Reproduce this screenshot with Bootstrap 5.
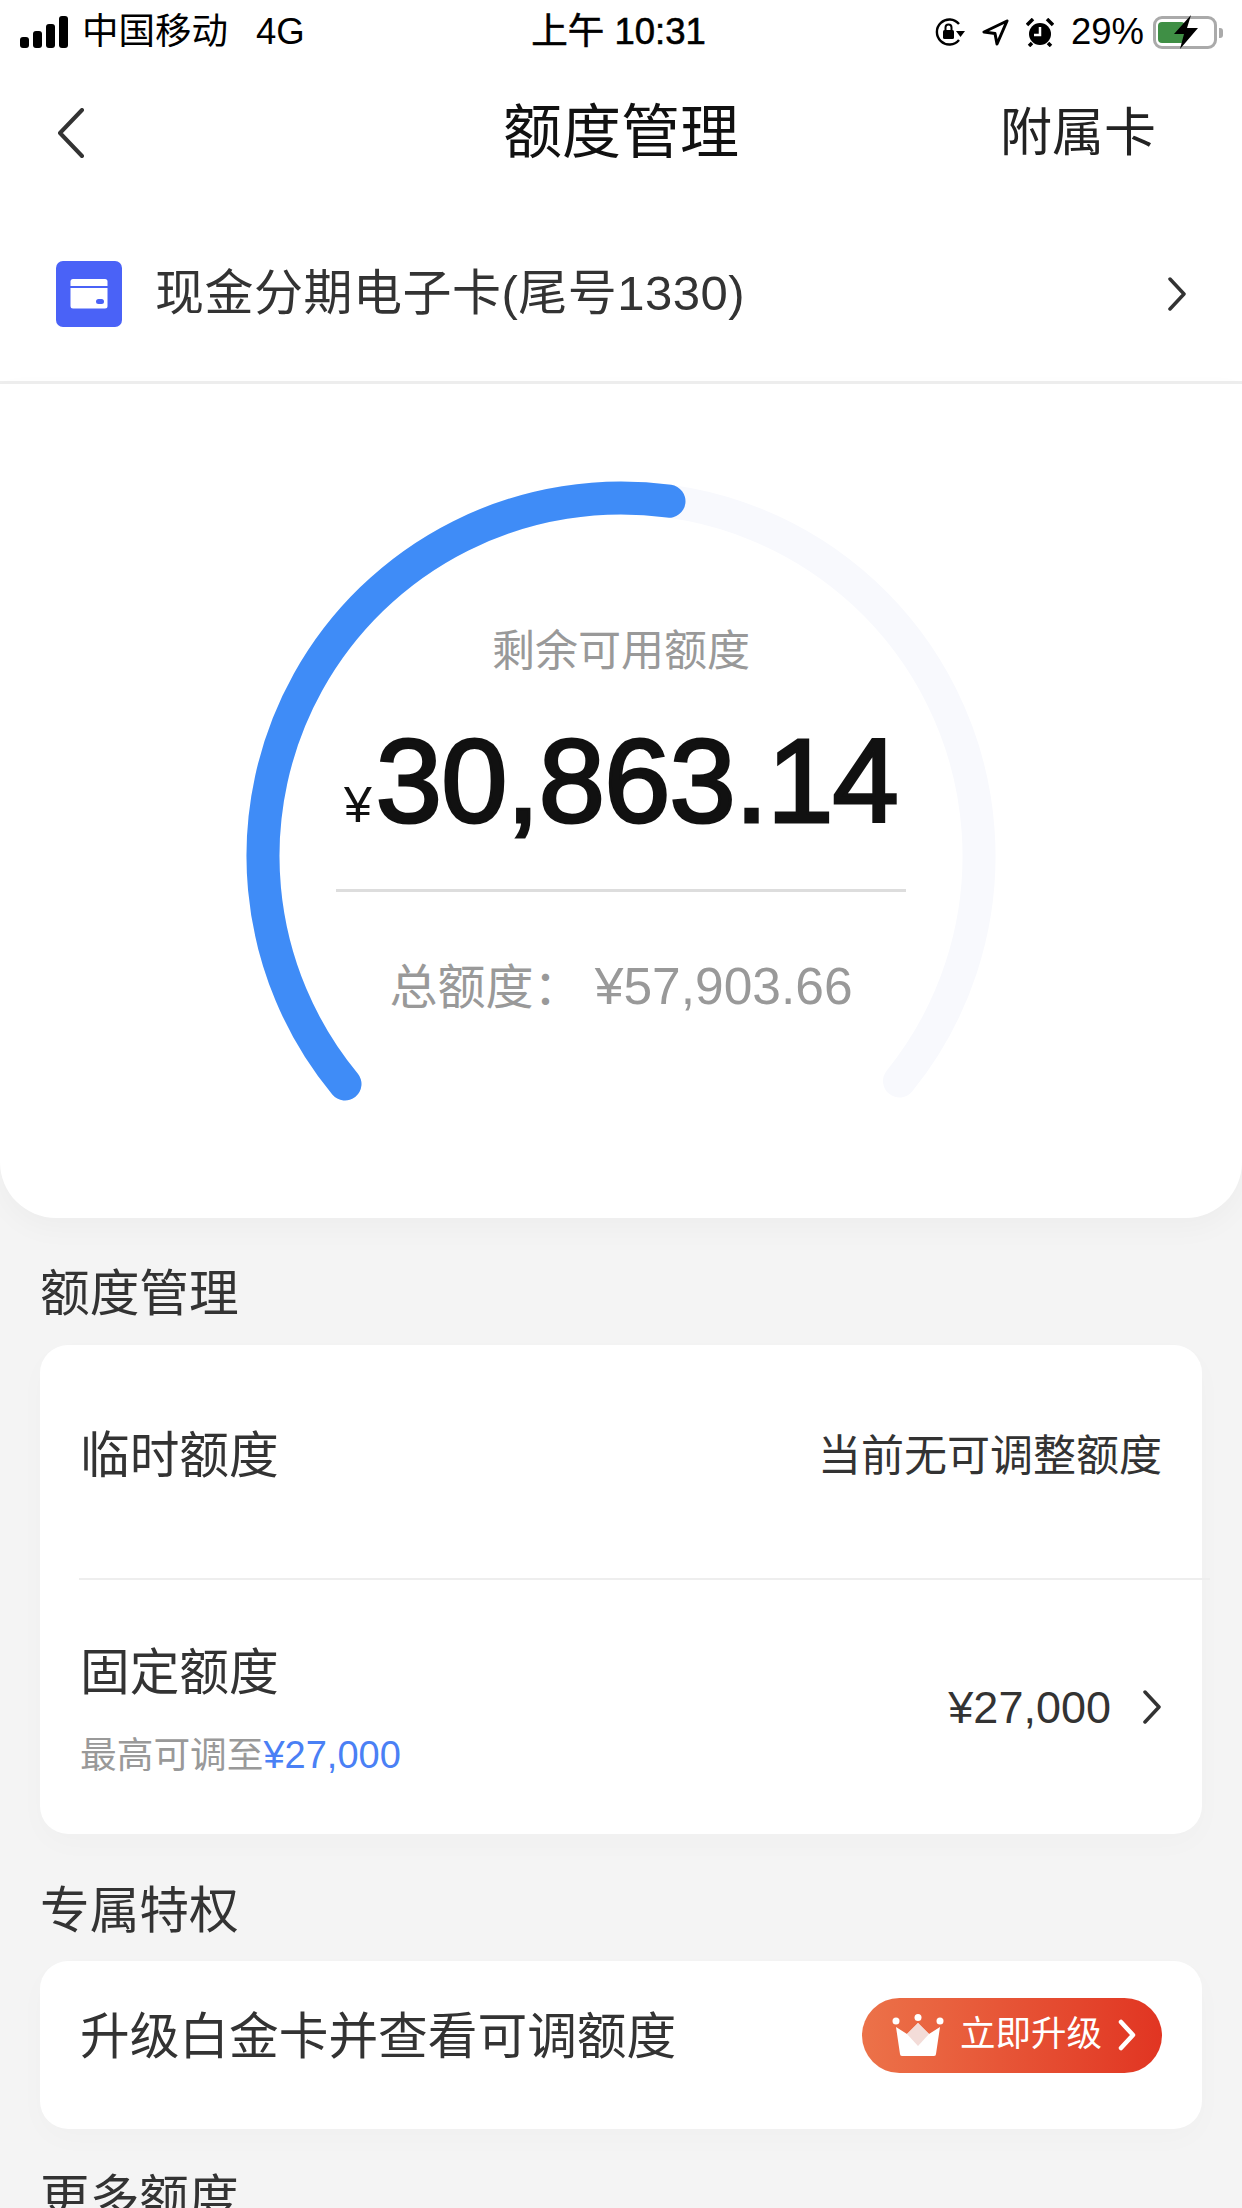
<!DOCTYPE html>
<html lang="zh-CN">
<head>
    <meta charset="UTF-8">
    <meta name="viewport" content="width=device-width, initial-scale=1.0">
    <title>额度管理</title>
    <link href="https://cdn.jsdelivr.net/npm/bootstrap@5.3.0/dist/css/bootstrap.min.css" rel="stylesheet">
    <style>
        html, body {
            height: 2208px;
            overflow: hidden;
        }
        body {
            background-color: #f4f4f4;
            color: #333;
            font-family: "Liberation Sans", "Noto Sans CJK SC", sans-serif;
        }
        .status-bar {
            height: 62px;
            padding: 2px 25px 0 20px;
            color: #000;
            font-size: 36.500px;
            line-height: 60px;
        }
        .status-side { flex: 1 1 0; }
        .signal { gap: 4px; height: 32px; }
        .signal i { display: block; width: 9px; border-radius: 3px; background: #000; }
        .signal-1 { height: 11px; }
        .signal-2 { height: 17px; }
        .signal-3 { height: 24px; }
        .signal-4 { height: 32px; }
        .carrier-name { margin-left: 14px; }
        .carrier-net { margin-left: 28px; }
        .clock { font-size: 36.500px; -webkit-text-stroke: .6px #000; }
        .status-icons { gap: 17px; }
        .battery {
            width: 64px;
            height: 33px;
            border: 3px solid #aaa;
            border-radius: 9px;
            margin-left: 9px;
        }
        .battery-fill { left: 2px; top: 3px; width: 27px; height: 21px; background: #3f8f45; border-radius: 4px; }
        .battery-bolt { left: 16px; top: -4px; }
        .battery-nub { left: 63px; top: 9px; width: 4px; height: 10px; background: #aaa; border-radius: 0 3px 3px 0; }

        .top-nav { height: 142px; padding: 0 86px 0 57px; }
        .top-title { font-size: 59px; color: #111; left: 0; right: 0; top: 0; line-height: 142px; text-align: center; }
        .top-action { font-size: 52px; color: #222; }

        .card-picker {
            height: 180px;
            padding: 2px 56px 0;
            border-bottom: 3px solid #eee;
        }
        .wallet-icon { width: 66px; height: 66px; }
        .card-name { font-size: 49px; margin-left: 33px; color: #333; letter-spacing: .5px; }

        .hero {
            height: 834px;
            padding-top: 237px;
            border-radius: 0 0 56px 56px;
            box-shadow: 0 10px 30px rgba(0, 0, 0, .03);
        }
        .gauge { left: 0; top: 0; }
        .hero-label { font-size: 43px; line-height: 60px; color: #999; position: relative; }
        .hero-amount {
            font-size: 119px;
            line-height: 140px;
            -webkit-text-stroke: 3px #111;
            color: #111;
            margin-top: 30px;
            letter-spacing: -.8px;
            position: relative;
        }
        .hero-yen { font-size: 50px; -webkit-text-stroke: 0; letter-spacing: 0; margin-right: 4px; }
        .hero-rule { width: 570px; height: 3px; background: #ddd; margin: 14px auto 0; position: relative; }
        .hero-total { font-size: 48px; line-height: 60px; color: #999; margin-top: 64px; position: relative; }
        .hero-total-num { font-size: 51.500px; }

        .page-body { padding: 0 40px; }
        .section-title { font-size: 49.700px; line-height: 60px; color: #333; }
        .title-limit { margin: 46px 0 21px; }
        .title-perk { margin: 47px 0 20px; }
        .title-more { margin-top: 40px; }
        .panel {
            border: 0;
            border-radius: 28px;
            box-shadow: 0 10px 30px rgba(0, 0, 0, .02);
        }
        .panel-row-top { height: 233px; padding: 81px 40px 0; }
        .panel-divider { height: 2px; background: #eee; margin: 0 -8px 0 39px; }
        .panel-row-bottom { height: 254px; padding: 0 40px; }
        .row-name { font-size: 49.700px; line-height: 60px; }
        .row-value { font-size: 43px; line-height: 60px; }
        .row-stack { padding-top: 63px; }
        .row-sub { font-size: 36.700px; line-height: 50px; margin-top: 27px; color: #999; white-space: nowrap; }
        .row-sub-num { color: #4a80f5; font-size: 38px; }
        .row-amount { font-size: 45px; color: #333; margin-right: 31px; padding-top: 2px; }

        .perk-panel { height: 168px; padding: 0 40px 20px; }
        .perk-name { padding-top: 3px; }
        .upgrade-btn {
            width: 300px;
            height: 75px;
            border-radius: 38px;
            background: linear-gradient(90deg, #ec7249, #e13522);
            font-size: 35.500px;
            color: #fff;
            padding: 0 27px 0 30px;
        }
        .upgrade-text { margin-left: 16px; margin-right: 16px; white-space: nowrap; }
    </style>
</head>
<body>
<div class="status-bar bg-white d-flex align-items-center">
    <div class="status-side d-flex align-items-center">
        <div class="signal d-flex align-items-end">
            <i class="signal-1"></i><i class="signal-2"></i><i class="signal-3"></i><i class="signal-4"></i>
        </div>
        <span class="carrier-name">中国移动</span>
        <span class="carrier-net">4G</span>
    </div>
    <div class="clock">上午 10:31</div>
    <div class="status-side status-icons d-flex align-items-center justify-content-end">
        <svg width="31" height="28" viewBox="0 0 31 28">
            <path d="M25 6A12.500 12.500 0 1 0 25 22" fill="none" stroke="#000" stroke-width="2.400"/>
            <path d="M22 13h9l-4.500 6z" fill="#000"/>
            <rect x="9" y="12" width="11" height="9" rx="1.500" fill="#000"/>
            <path d="M11.500 12V9.500a3 3 0 0 1 6 0V12" fill="none" stroke="#000" stroke-width="2"/>
        </svg>
        <svg width="27" height="27" viewBox="0 0 27 27">
            <path d="M25 2 2 13l11 1.500L15 25z" fill="none" stroke="#000" stroke-width="3" stroke-linejoin="round"/>
        </svg>
        <svg width="28" height="29" viewBox="0 0 28 29">
            <circle cx="14" cy="16" r="11" fill="#000"/>
            <path d="M14 9v8H8" fill="none" stroke="#fff" stroke-width="2.500"/>
            <path d="M1 7 7 1M27 7 21 1M6 25l-3 3M22 25l3 3" stroke="#000" stroke-width="3.500"/>
        </svg>
        <div class="d-flex align-items-center">
            <span>29%</span>
            <div class="battery position-relative">
                <div class="battery-fill position-absolute"></div>
                <svg class="battery-bolt position-absolute" width="28" height="34" viewBox="0 0 28 34">
                    <path d="M19 0 2 19h10L8 34l18-21H15z" fill="#000"/>
                </svg>
                <div class="battery-nub position-absolute"></div>
            </div>
        </div>
    </div>
</div>

<div class="top-nav bg-white d-flex align-items-center justify-content-between position-relative">
    <div class="top-title position-absolute">额度管理</div>
    <svg class="position-relative" width="28" height="50" viewBox="0 0 28 50">
        <path d="M25 2 3 25l22 23" fill="none" stroke="#333" stroke-width="4" stroke-linecap="round" stroke-linejoin="round"/>
    </svg>
    <div class="top-action position-relative">附属卡</div>
</div>

<div class="card-picker bg-white d-flex align-items-center">
    <svg class="wallet-icon" viewBox="0 0 66 66">
        <rect width="66" height="66" rx="7" fill="#4a62f7"/>
        <path d="M17 18h32a2.500 2.500 0 0 1 2.500 2.500V25h-37v-4.500A2.500 2.500 0 0 1 17 18z" fill="#fff"/>
        <path d="M14.500 27h37v18a2.500 2.500 0 0 1-2.500 2.500H17a2.500 2.500 0 0 1-2.500-2.500z" fill="#fff"/>
        <rect x="40" y="38" width="8" height="5" rx="2.500" fill="#4a62f7"/>
    </svg>
    <span class="card-name">现金分期电子卡(尾号1330)</span>
    <svg class="ms-auto" width="18" height="34" viewBox="0 0 18 34">
        <path d="M2 2l14 15L2 32" fill="none" stroke="#333" stroke-width="3.500" stroke-linecap="round" stroke-linejoin="round"/>
    </svg>
</div>

<div class="hero bg-white text-center position-relative">
    <svg class="gauge position-absolute" width="1242" height="834" viewBox="0 0 1242 834">
        <path d="M345 700A358 358 0 1 1 899.500 697" fill="none" stroke="#f8f9fd" stroke-width="33" stroke-linecap="round"/>
        <path d="M345 700A358 358 0 0 1 669 117.200" fill="none" stroke="#3f8cf7" stroke-width="33" stroke-linecap="round"/>
    </svg>
    <div class="hero-label">剩余可用额度</div>
    <div class="hero-amount"><span class="hero-yen">¥</span>30,863.14</div>
    <div class="hero-rule"></div>
    <div class="hero-total">总额度： <span class="hero-total-num">¥57,903.66</span></div>
</div>

<div class="page-body">
    <div class="section-title title-limit">额度管理</div>
    <div class="card panel">
        <div class="panel-row-top d-flex justify-content-between align-items-start">
            <span class="row-name">临时额度</span>
            <span class="row-value">当前无可调整额度</span>
        </div>
        <div class="panel-divider"></div>
        <div class="panel-row-bottom d-flex justify-content-between align-items-center">
            <div class="row-stack align-self-start">
                <div class="row-name">固定额度</div>
                <div class="row-sub">最高可调至<span class="row-sub-num">¥27,000</span></div>
            </div>
            <div class="d-flex align-items-center">
                <span class="row-amount">¥27,000</span>
                <svg width="20" height="34" viewBox="0 0 20 34">
                    <path d="M3 2l14 15L3 32" fill="none" stroke="#333" stroke-width="3.500" stroke-linecap="round" stroke-linejoin="round"/>
                </svg>
            </div>
        </div>
    </div>

    <div class="section-title title-perk">专属特权</div>
    <div class="card panel perk-panel d-flex flex-row justify-content-between align-items-center">
        <span class="row-name perk-name">升级白金卡并查看可调额度</span>
        <div class="upgrade-btn d-flex align-items-center">
            <svg width="52" height="42" viewBox="0 0 52 42" class="flex-shrink-0">
                <circle cx="4" cy="7" r="3.500" fill="#fff"/>
                <circle cx="26" cy="3.500" r="3.500" fill="#fff"/>
                <circle cx="48" cy="7" r="3.500" fill="#fff"/>
                <path d="M4 13l11 7 11-11 11 11 11-7-4 27a2 2 0 0 1-2 2H10a2 2 0 0 1-2-2z" fill="#fff"/>
                <path d="M15 20l11-11 11 11-11 12z" fill="#f3dcd8"/>
            </svg>
            <span class="upgrade-text">立即升级</span>
            <svg width="18" height="32" viewBox="0 0 18 32" class="flex-shrink-0">
                <path d="M3 3l12 13L3 29" fill="none" stroke="#fff" stroke-width="4.500" stroke-linecap="round" stroke-linejoin="round"/>
            </svg>
        </div>
    </div>

    <div class="section-title title-more">更多额度</div>
</div>

<script src="https://cdn.jsdelivr.net/npm/bootstrap@5.3.0/dist/js/bootstrap.bundle.min.js"></script>
</body>
</html>
